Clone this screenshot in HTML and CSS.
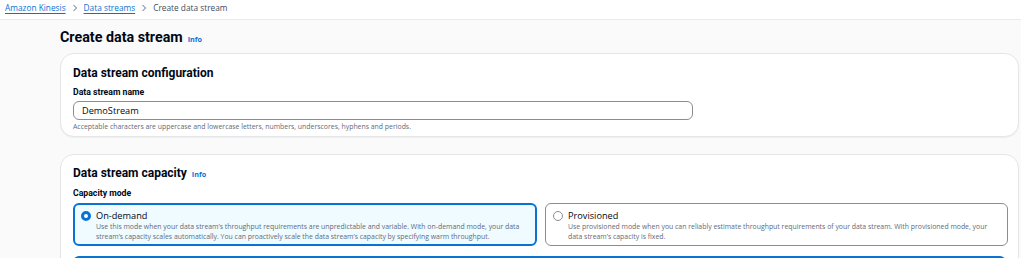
FILE: index.html
```html
<!DOCTYPE html>
<html>
<head>
<meta charset="utf-8">
<link rel="stylesheet" href="styles.css">
</head>
<body>
<nav class="crumbs">
  <a class="crumb-link" href="#">Amazon Kinesis</a>
  <svg class="chev" viewBox="0 0 8 10" width="6" height="8"><path d="M2 1l4 4-4 4" fill="none" stroke="#7d8998" stroke-width="1.4"/></svg>
  <a class="crumb-link" href="#">Data streams</a>
  <svg class="chev" viewBox="0 0 8 10" width="6" height="8"><path d="M2 1l4 4-4 4" fill="none" stroke="#7d8998" stroke-width="1.4"/></svg>
  <span class="crumb-current">Create data stream</span>
</nav>
<main class="content">
  <div class="page-head">
    <h1 class="title">Create data stream</h1>
    <a class="info" href="#">Info</a>
  </div>
  <section class="card">
    <h2 class="card-title">Data stream configuration</h2>
    <div class="field-label">Data stream name</div>
    <div class="input">DemoStream</div>
    <div class="hint">Acceptable characters are uppercase and lowercase letters, numbers, underscores, hyphens and periods.</div>
  </section>
  <section class="card card2">
    <div class="card-head">
      <h2 class="card-title">Data stream capacity</h2>
      <a class="info" href="#">Info</a>
    </div>
    <div class="field-label">Capacity mode</div>
    <div class="tiles">
      <div class="tile selected">
        <span class="radio on"></span>
        <div class="tile-body">
          <div class="tile-title">On-demand</div>
          <div class="tile-desc">Use this mode when your data stream’s throughput requirements are unpredictable and variable. With on-demand mode, your data stream’s capacity scales automatically. You can proactively scale the data stream’s capacity by specifying warm throughput.</div>
        </div>
      </div>
      <div class="tile">
        <span class="radio"></span>
        <div class="tile-body">
          <div class="tile-title">Provisioned</div>
          <div class="tile-desc">Use provisioned mode when you can reliably estimate throughput requirements of your data stream. With provisioned mode, your data stream’s capacity is fixed.</div>
        </div>
      </div>
    </div>
    <div class="alert"></div>
  </section>
</main>
</body>
</html>
```
FILE: styles.css
```css
* { box-sizing: border-box; }
html, body { margin: 0; padding: 0; }
body {
  font-family: "Open Sans", "Noto Sans", sans-serif;
  background: #fafafa;
  color: #000716;
  width: 1021px;
  height: 258px;
  overflow: hidden;
}
.crumbs {
  height: 20px;
  background: #ffffff;
  border-bottom: 1px solid #e9ebed;
  display: flex;
  align-items: center;
  gap: 6px;
  padding: 0 0 4px 5px;
  font-size: 8.3px;
}
.crumb-link {
  color: #0972d3;
  text-decoration: underline;
  text-underline-offset: 2px;
}
.crumb-current { color: #414d5c; }
.chev { display: block; }
.content { padding: 7px 2px 0 60px; }
.page-head { display: flex; align-items: baseline; gap: 5px; height: 26px; }
.title {
  margin: 0;
  font-family: "Roboto", "Open Sans", sans-serif;
  font-size: 14.3px;
  font-weight: 700;
  color: #000716;
  line-height: 20px;
}
.info {
  color: #0972d3;
  font-size: 7.2px;
  font-weight: 700;
  text-decoration: none;
}
.card {
  background: #fff;
  border: 1px solid #e4e6e8;
  border-radius: 14px;
  padding: 10px 12px 10px 12px;
  height: 84px;
  box-shadow: 0 1px 1px rgba(0,7,22,0.05);
}
.card2 { margin-top: 17px; height: 120px; padding-top: 9px; }
.card-head { display: flex; align-items: baseline; gap: 5px; }
.card-title {
  margin: 0;
  font-family: "Roboto", "Open Sans", sans-serif;
  font-size: 12px;
  font-weight: 700;
  line-height: 18px;
  color: #000716;
}
.field-label {
  font-family: "Roboto", "Open Sans", sans-serif;
  font-size: 8.7px;
  font-weight: 700;
  margin-top: 3px;
  line-height: 14px;
}
.card2 .field-label { margin-top: 4px; }
.input {
  margin-top: 2px;
  width: 620px;
  height: 19px;
  border: 1px solid #8c8c94;
  border-radius: 6px;
  font-size: 9.2px;
  line-height: 17px;
  padding-left: 8px;
}
.hint {
  font-size: 6.9px;
  color: #5f6b7a;
  margin-top: 2px;
}
.tiles {
  display: grid;
  grid-template-columns: 464px 463px;
  gap: 8px;
  margin-top: 3px;
}
.tile {
  height: 43px;
  border: 1px solid #8c8c94;
  border-radius: 6px;
  display: flex;
  gap: 5px;
  padding: 5px 8px 0 7px;
  background: #fff;
}
.tile.selected {
  border: 2px solid #0972d3;
  background: #f0fbff;
  padding: 4px 7px 0 6px;
}
.radio {
  flex: none;
  width: 10px;
  height: 10px;
  border-radius: 50%;
  border: 1px solid #8c8c94;
  margin-top: 2px;
  background: #fff;
}
.radio.on { border: 3px solid #0972d3; }
.tile-title { font-size: 9.2px; line-height: 13px; color: #000716; }
.tile-desc { font-size: 6.9px; line-height: 10px; color: #5f6b7a; }
.alert {
  margin-top: 10px;
  height: 20px;
  border: 2px solid #0972d3;
  border-radius: 6px;
  background: #f0fbff;
}
```
